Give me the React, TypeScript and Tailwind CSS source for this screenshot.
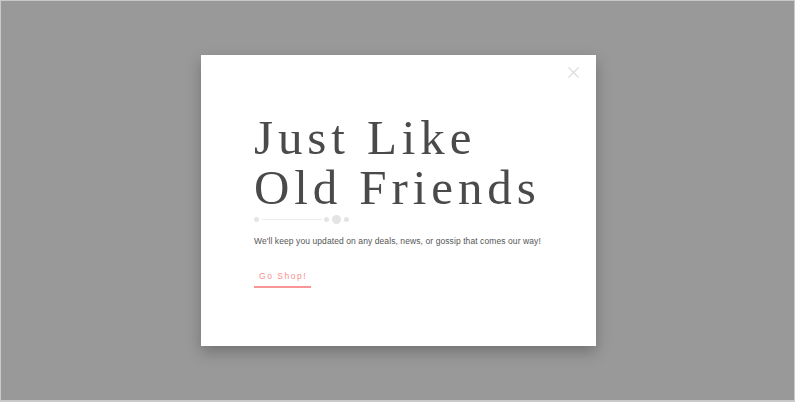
export default function App() {
  return (
    <div className="w-[795px] h-[402px] bg-[#999999] border-l border-t border-r border-b-2 border-[#c9c9c9] pl-[200px] pt-[54px]">
      {/* Modal */}
      <div className="relative w-[395px] h-[291px] bg-white shadow-[0_6px_14px_rgba(0,0,0,0.25)] pl-[53px] pt-[58px]">
        <button className="absolute right-[17px] top-[12px] w-[11px] h-[11px]">
          <svg viewBox="0 0 11 11" className="w-[11px] h-[11px]" stroke="#dcdcdc" strokeWidth="1.2">
            <path d="M0.5 0.5 L10.5 10.5 M10.5 0.5 L0.5 10.5" />
          </svg>
        </button>

        <h1
          className="text-[49px] leading-[50px] tracking-[0.1em] text-[#4a4a4a]"
          style={{ fontFamily: '"Liberation Serif", "DejaVu Serif", serif' }}
        >
          Just Like
          <br />
          Old Friends
        </h1>

        {/* Divider */}
        <div className="flex items-center mt-[1px] h-[10px]">
          <span className="w-[5px] h-[5px] rounded-full bg-[#e4e4e4]" />
          <span className="w-[60px] h-px bg-[#ececec] ml-[3px]" />
          <span className="w-[5px] h-[5px] rounded-full bg-[#e4e4e4] ml-[2px]" />
          <span className="w-[9px] h-[9px] rounded-full bg-[#e4e4e4] ml-[3px]" />
          <span className="w-[5px] h-[5px] rounded-full bg-[#e4e4e4] ml-[3px]" />
        </div>

        <p
          className="mt-[11px] text-[8.5px] tracking-[0.01em] text-[#555555]"
          style={{ fontFamily: '"Liberation Sans", Arial, sans-serif' }}
        >
          We'll keep you updated on any deals, news, or gossip that comes our way!
        </p>

        <a
          className="inline-block mt-[22px] border-b-2 border-[#f99595] pl-[5px] pr-[4px] pb-[3px] text-[8.5px] tracking-[0.18em] text-[#f88e8e]"
          style={{ fontFamily: '"Liberation Sans", Arial, sans-serif' }}
        >
          Go Shop!
        </a>
      </div>
    </div>
  );
}
